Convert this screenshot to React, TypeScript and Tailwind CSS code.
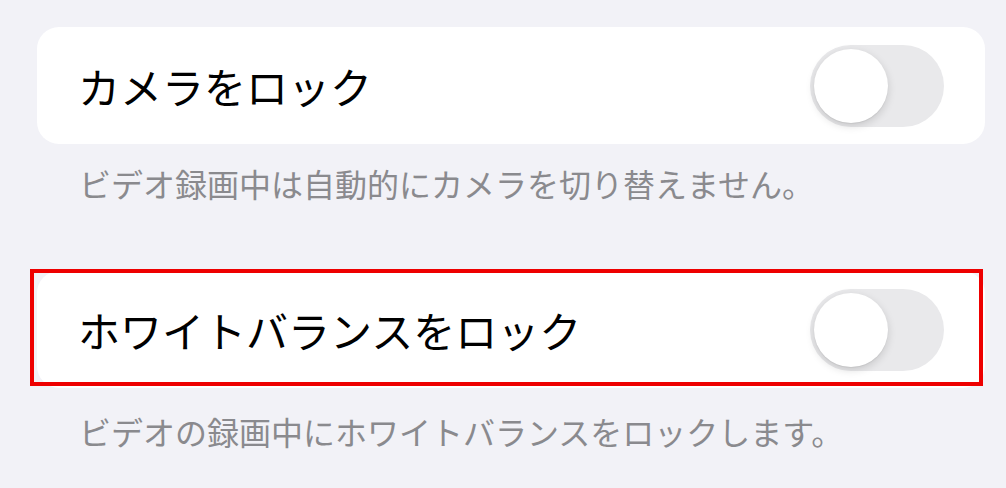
const Toggle = () => {
  return (
    <div className="relative w-[134px] h-[82px] rounded-full bg-[#e9e9eb] shrink-0">
      <div className="absolute left-[4px] top-[4px] w-[74px] h-[74px] rounded-full bg-white shadow-[0_3px_8px_rgba(0,0,0,0.15),0_1px_1px_rgba(0,0,0,0.06)]"></div>
    </div>
  );
};

const Row = ({ label }: { label: string }) => {
  return (
    <div className="flex items-center justify-between h-[117px] rounded-[22px] bg-white pl-[41px] pr-[41px]">
      <span className="text-[42px] leading-none text-black">{label}</span>
      <Toggle />
    </div>
  );
};

const App = () => {
  return (
    <div
      className="w-[1006px] h-[488px] bg-[#f2f2f7] pt-[27px] pl-[37px] pr-[21px] overflow-hidden"
      style={{ fontFamily: '"Noto Sans CJK JP", "Noto Sans", sans-serif' }}
    >
      <Row label="カメラをロック" />
      <p className="mt-[19px] pl-[42px] text-[32px] leading-[40px] text-[#8a8a8e]">
        ビデオ録画中は自動的にカメラを切り替えません。
      </p>

      <div className="relative mt-[68px]">
        <Row label="ホワイトバランスをロック" />
        {/* annotation box */}
        <div className="absolute -left-[7px] -top-[2px] w-[953px] h-[117px] border-[4px] border-[#ee0000] pointer-events-none"></div>
      </div>
      <p className="mt-[23px] pl-[42px] text-[32px] leading-[40px] text-[#8a8a8e]">
        ビデオの録画中にホワイトバランスをロックします。
      </p>
    </div>
  );
};

export default App;
